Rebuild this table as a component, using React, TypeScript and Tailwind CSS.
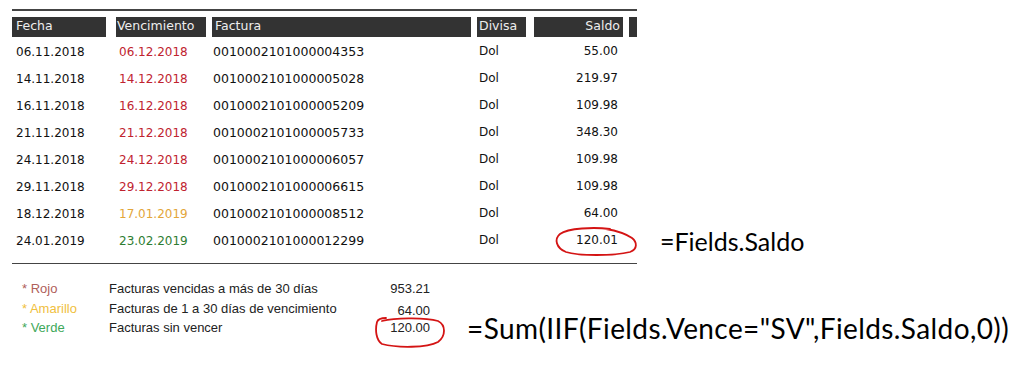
import React from "react"

type Row = {
  fecha: string
  vence: string
  color: string
  factura: string
  saldo: string
}

const rows: Row[] = [
  { fecha: "06.11.2018", vence: "06.12.2018", color: "text-[#c0232f]", factura: "0010002101000004353", saldo: "55.00" },
  { fecha: "14.11.2018", vence: "14.12.2018", color: "text-[#c0232f]", factura: "0010002101000005028", saldo: "219.97" },
  { fecha: "16.11.2018", vence: "16.12.2018", color: "text-[#c0232f]", factura: "0010002101000005209", saldo: "109.98" },
  { fecha: "21.11.2018", vence: "21.12.2018", color: "text-[#c0232f]", factura: "0010002101000005733", saldo: "348.30" },
  { fecha: "24.11.2018", vence: "24.12.2018", color: "text-[#c0232f]", factura: "0010002101000006057", saldo: "109.98" },
  { fecha: "29.11.2018", vence: "29.12.2018", color: "text-[#c0232f]", factura: "0010002101000006615", saldo: "109.98" },
  { fecha: "18.12.2018", vence: "17.01.2019", color: "text-[#e3a63a]", factura: "0010002101000008512", saldo: "64.00" },
  { fecha: "24.01.2019", vence: "23.02.2019", color: "text-[#2e7d32]", factura: "0010002101000012299", saldo: "120.01" },
]

// trazo rojo a mano alzada
function Circle1() {
  return (
    <svg className="absolute left-[20px] top-[-5px]" width="84" height="30" viewBox="0 0 84 30" fill="none">
      <path
        d="M56 3 C40 1, 14 2, 6 8 C0 13, 2 22, 12 26 C24 30, 60 30, 76 26 C84 23, 83 16, 78 12 C72 8, 64 5, 52 3"
        stroke="#d41414"
        strokeWidth="1.8"
        strokeLinecap="round"
      />
    </svg>
  )
}

function Circle2() {
  return (
    <svg className="absolute left-[23px] top-[-2px]" width="74" height="32" viewBox="0 0 74 32" fill="none">
      <path
        d="M10 5 C25 1, 55 2, 66 5 C74 9, 74 20, 66 26 C55 32, 25 32, 10 28 C4 24, 3 14, 5 6 C6 3, 9 2, 14 2"
        stroke="#d41414"
        strokeWidth="1.8"
        strokeLinecap="round"
      />
    </svg>
  )
}

export default function App() {
  return (
    <div className="h-[371px] w-[1022px] overflow-hidden bg-white pl-[12px] pt-[9px] font-['DejaVu_Sans',sans-serif] text-[12px] text-[#111]">
      {/* línea superior */}
      <div className="h-[1.5px] w-[625px] bg-[#444]" />

      {/* encabezado */}
      <div className="mt-[6px] flex h-[20px] items-center text-[12.5px] text-[#eee]">
        <div className="flex h-full w-[94px] items-center bg-[#333] pl-[4px]">Fecha</div>
        <div className="ml-[10px] flex h-full w-[90px] items-center bg-[#333] pl-[1px]">Vencimiento</div>
        <div className="ml-[6px] flex h-full w-[259px] items-center bg-[#333] pl-[3px]">Factura</div>
        <div className="ml-[6px] flex h-full w-[49px] items-center bg-[#333] pl-[2px]">Divisa</div>
        <div className="ml-[8px] flex h-full w-[89px] items-center justify-end bg-[#333] pr-[3px]">Saldo</div>
        <div className="ml-[6px] h-full w-[8px] bg-[#333]" />
      </div>

      {/* filas */}
      <div className="mt-[2px]">
        {rows.map((r, i) => (
          <div key={r.factura} className="flex h-[27px] items-center">
            <div className="w-[94px] pl-[4px]">{r.fecha}</div>
            <div className={`ml-[10px] w-[90px] pl-[3px] ${r.color}`}>{r.vence}</div>
            <div className="ml-[6px] w-[259px] pl-[1px] text-[12.5px]">{r.factura}</div>
            <div className="mb-[3px] ml-[6px] w-[49px] pl-[2px]">Dol</div>
            <div className="relative mb-[3px] ml-[8px] w-[89px] pr-[5px] text-right">
              {r.saldo}
              {i === rows.length - 1 && <Circle1 />}
            </div>
            {i === rows.length - 1 && (
              <div className="ml-[37px] whitespace-nowrap font-['Lato',sans-serif] text-[25px] leading-none text-black">
                =Fields.Saldo
              </div>
            )}
          </div>
        ))}
      </div>

      {/* línea inferior */}
      <div className="mt-[8px] h-[1.5px] w-[625px] bg-[#444]" />

      {/* resumen */}
      <div className="mt-[15px] font-['Liberation_Sans',sans-serif] text-[13px] text-[#222]">
        <div className="flex h-[19.5px] items-center">
          <div className="w-[97px] pl-[10px] text-[#b0605a]">* Rojo</div>
          <div className="w-[240px]">Facturas vencidas a más de 30 días</div>
          <div className="w-[81px] text-right">953.21</div>
        </div>
        <div className="flex h-[19.5px] items-center">
          <div className="w-[97px] pl-[10px] text-[#f0c040]">* Amarillo</div>
          <div className="w-[240px]">Facturas de 1 a 30 días de vencimiento</div>
          <div className="mt-[4px] w-[81px] text-right">64.00</div>
        </div>
        <div className="flex h-[19.5px] items-center">
          <div className="w-[97px] pl-[10px] text-[#3ea85a]">* Verde</div>
          <div className="w-[240px]">Facturas sin vencer</div>
          <div className="relative w-[81px] text-right">
            120.00
            <Circle2 />
          </div>
          <div className="ml-[37px] whitespace-nowrap font-['Lato',sans-serif] text-[28px] leading-none tracking-[0.4px] text-black">
            =Sum(IIF(Fields.Vence="SV",Fields.Saldo,0))
          </div>
        </div>
      </div>
    </div>
  )
}
